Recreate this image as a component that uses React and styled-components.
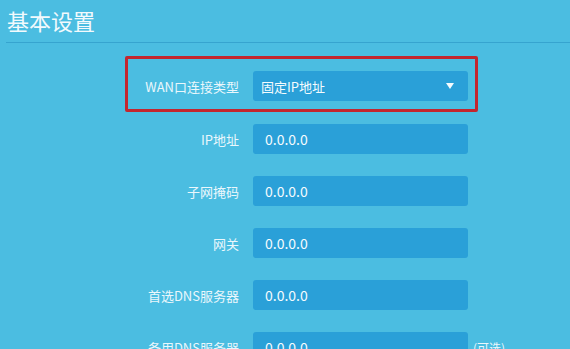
import React from "react";
import styled, { createGlobalStyle } from "styled-components";

const GlobalStyle = createGlobalStyle`
  html, body {
    margin: 0;
    padding: 0;
    background: #4bbde1;
    font-family: "Noto Sans CJK SC", "Noto Sans", sans-serif;
  }
`;

const Page = styled.div`
  width: 570px;
  height: 349px;
  overflow: hidden;
  background: #4bbde1;
`;

const Header = styled.div`
  margin-left: 6px;
  height: 43px;
  border-bottom: 1px solid #36a4cf;
  display: flex;
  align-items: center;
  box-sizing: border-box;
`;

const Title = styled.h1`
  margin: 0 0 3px 1px;
  font-size: 22px;
  font-weight: 400;
  color: #f2fafd;
`;

const Form = styled.div`
  display: flex;
  flex-direction: column;
  gap: 22px;
  margin-top: 28px;
  padding-left: 128px;
`;

const Row = styled.div`
  position: relative;
  display: grid;
  grid-template-columns: 111px 229px auto;
  align-items: center;
  height: 30px;
  margin-bottom: ${({ $highlight }) => ($highlight ? "1px" : "0")};

  ${({ $highlight }) =>
    $highlight &&
    `
    &::after {
      content: "";
      position: absolute;
      top: -15px;
      left: -3px;
      width: 347px;
      height: 50px;
      border: 3px solid #c3262f;
      border-radius: 2px;
      pointer-events: none;
    }
  `}
`;

const Label = styled.div`
  text-align: right;
  font-size: 13px;
  color: #eaf7fc;
  white-space: nowrap;
`;

const Field = styled.div`
  margin-left: 14px;
  height: 30px;
  box-sizing: border-box;
  background: #2aa0d8;
  border-radius: 3px;
  display: flex;
  align-items: center;
  justify-content: space-between;
  padding: 0 14px 0 ${({ $select }) => ($select ? "8px" : "12px")};
  color: #f4fbfe;
  font-size: ${({ $select }) => ($select ? "13px" : "14px")};
`;

const Caret = styled.span`
  width: 0;
  height: 0;
  border-left: 4.5px solid transparent;
  border-right: 4.5px solid transparent;
  border-top: 6px solid #f4fbfe;
`;

const Hint = styled.div`
  padding-left: 5px;
  font-size: 12px;
  color: #eaf7fc;
  white-space: nowrap;
`;

const fields = [
  { label: "IP地址", value: "0.0.0.0" },
  { label: "子网掩码", value: "0.0.0.0" },
  { label: "网关", value: "0.0.0.0" },
  { label: "首选DNS服务器", value: "0.0.0.0" },
  { label: "备用DNS服务器", value: "0.0.0.0", hint: "(可选)" },
];

export default function App() {
  return (
    <>
      <GlobalStyle />
      <Page>
        <Header>
          <Title>基本设置</Title>
        </Header>
        <Form>
          <Row $highlight>
            <Label>WAN口连接类型</Label>
            <Field $select>
              固定IP地址
              <Caret />
            </Field>
          </Row>
          {fields.map((f) => (
            <Row key={f.label}>
              <Label>{f.label}</Label>
              <Field>{f.value}</Field>
              {f.hint ? <Hint>{f.hint}</Hint> : null}
            </Row>
          ))}
        </Form>
      </Page>
    </>
  );
}
